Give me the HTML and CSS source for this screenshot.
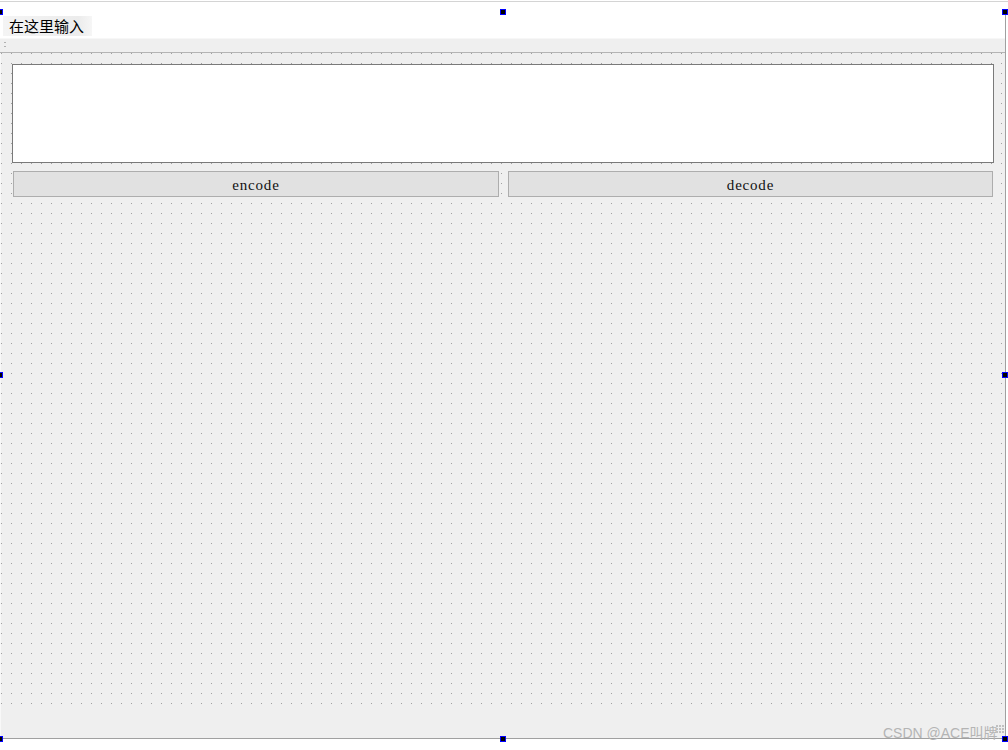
FILE: index.html
```html
<!DOCTYPE html>
<html>
<head>
<meta charset="utf-8">
<link rel="stylesheet" href="styles.css">
</head>
<body>
<div class="stage">
  <div class="topline"></div>
  <div class="window">
    <div class="menubar">
      <div class="menu-item">在这里输入</div>
    </div>
    <div class="toolbar"><span class="grip"></span></div>
    <div class="central">
      <div class="textedit"></div>
      <div class="buttons">
        <button class="btn">encode</button>
        <button class="btn">decode</button>
      </div>
    </div>
    <div class="statusbar"></div>
  </div>
  <div class="handle h-tl"></div>
  <div class="handle h-tm"></div>
  <div class="handle h-tr"></div>
  <div class="handle h-ml"></div>
  <div class="handle h-mr"></div>
  <div class="handle h-bl"></div>
  <div class="handle h-bm"></div>
  <div class="handle h-br"></div>
  <div class="watermark">CSDN @ACE叫牌</div>
  <div class="sizegrip"></div>
</div>
</body>
</html>
```
FILE: styles.css
```css
html, body {
  margin: 0;
  padding: 0;
  background: #ffffff;
}
.stage {
  position: relative;
  width: 1008px;
  height: 750px;
  overflow: hidden;
  background: #ffffff;
  font-family: "Noto Sans CJK SC", "Noto Sans", sans-serif;
}
.topline {
  margin-top: 1px;
  height: 1px;
  background: #d4d4d4;
}
.window {
  margin-top: 10px;
  width: 1005px;
  border-right: 1px solid #a0a0a0;
  border-bottom: 1px solid #a0a0a0;
  background: #efefef;
  display: flex;
  flex-direction: column;
}
.menubar {
  height: 26px;
  background: #ffffff;
  padding: 4px 0 0 3px;
  box-sizing: border-box;
}
.menu-item {
  width: 89px;
  height: 20px;
  box-sizing: border-box;
  padding-left: 6px;
  font-size: 15px;
  line-height: 20px;
  color: #000;
  background: linear-gradient(to right, #f4f4f4, #ececec 85%, #f6f6f6);
}
.toolbar {
  border-top: 1px solid #f7f7f7;
  border-bottom: 1px solid #b4b4b4;
  background: #efefef;
  height: 13px;
}
.grip {
  display: block;
  margin: 3px 0 0 4px;
  width: 2px;
  height: 7px;
  background: linear-gradient(to bottom, #b0b0b0 0 1px, transparent 1px 4px, #b0b0b0 4px 5px, transparent 5px);
}
.central {
  height: 652px;
  border-left: 1px solid #f8f8f8;
  background-color: #efefef;
  background-image: conic-gradient(at 1px 1px, transparent 270deg, #a0a0a0 0);
  background-size: 10px 10px;
  background-position: 0 0;
  padding: 11px 12px 0 11px;
  box-sizing: border-box;
  display: flex;
  flex-direction: column;
  gap: 8px;
}
.textedit {
  width: 982px;
  height: 99px;
  box-sizing: border-box;
  border: 1px solid #7a7a7a;
  background: #ffffff;
}
.buttons {
  display: flex;
  gap: 9px;
  padding-left: 1px;
}
.btn {
  height: 26px;
  box-sizing: border-box;
  border: 1px solid #adadad;
  background: #e1e1e1;
  font-family: "Liberation Serif", "DejaVu Serif", serif;
  font-size: 15px;
  letter-spacing: 0.8px;
  color: #111;
  padding: 2px 0 0 0;
  margin: 0;
  border-radius: 0;
}
.btn:first-child { width: 486px; }
.btn:last-child { width: 485px; }
.statusbar {
  height: 33px;
  border-left: 1px solid #f8f8f8;
}
.handle {
  position: absolute;
  width: 6px;
  height: 6px;
  box-sizing: border-box;
  border: 1px solid #0000ff;
  background: #000000;
}
.h-tl { left: -3px; top: 9px; }
.h-tm { left: 500px; top: 9px; }
.h-tr { left: 1002px; top: 9px; }
.h-ml { left: -3px; top: 372px; }
.h-mr { left: 1002px; top: 372px; }
.h-bl { left: -3px; top: 736px; }
.h-bm { left: 500px; top: 736px; }
.h-br { left: 1002px; top: 736px; }
.watermark {
  position: absolute;
  left: 883px;
  top: 723px;
  font-family: "Liberation Sans", "Noto Sans CJK SC", sans-serif;
  font-size: 14px;
  color: #b4b4b4;
  line-height: 20px;
}
.sizegrip {
  position: absolute;
  left: 996px;
  top: 725px;
  width: 8px;
  height: 8px;
  background-image: conic-gradient(at 2px 2px, transparent 270deg, #c0c0c0 0);
  background-size: 3px 3px;
}
```
